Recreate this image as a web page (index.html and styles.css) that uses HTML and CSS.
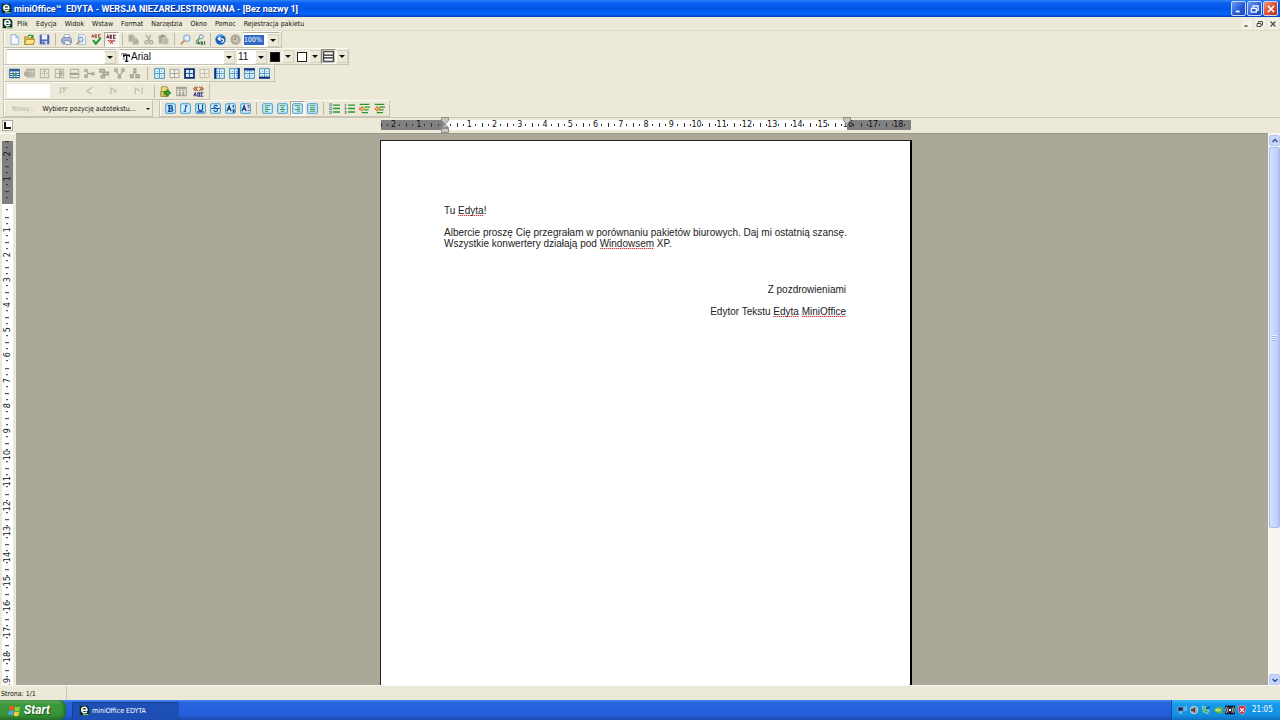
FILE: index.html
```html
<!DOCTYPE html>
<html lang="pl">
<head>
<meta charset="utf-8">
<title>miniOffice EDYTA</title>
<link rel="stylesheet" href="styles.css">
</head>
<body>
<svg class="sprite" aria-hidden="true">
  <symbol id="app" viewBox="0 0 16 16"><path d="M1 1h11l3 3v11H1z" fill="#0b3028"/><path d="M4.500 7.500h7C12 2 4 2 4 7s4.500 5 7.500 3" fill="none" stroke="#fff" stroke-width="2.200"/><path d="M6 14h8" stroke="#8ed08a" stroke-width="1.500"/></symbol>
  <symbol id="new" viewBox="0 0 16 16"><path d="M3 1h7l4 4v10H3z" fill="#f4f9ff" stroke="#7b9fcb"/><path d="M10 1v4h4" fill="#b7d2f2" stroke="#7b9fcb"/></symbol>
  <symbol id="open" viewBox="0 0 16 16"><path d="M1 4h5l1 2h7v9H1z" fill="#e9bd3e" stroke="#9c7a1c"/><path d="M3 8h13l-3 7H1z" fill="#ffe683" stroke="#9c7a1c"/><path d="M6 3c3-3 6-1 7 2m-3 0h3V1" fill="none" stroke="#2a9a2a" stroke-width="1.800"/></symbol>
  <symbol id="save" viewBox="0 0 16 16"><path d="M1 1h14v14H1z" fill="#4a62b8"/><path d="M4 1h8v7H4z" fill="#eef3ff"/><path d="M5 10h7v5H5z" fill="#c9d3f2"/><path d="M6 11h2v4H6z" fill="#33458f"/></symbol>
  <symbol id="print" viewBox="0 0 16 16"><path d="M5 1h7l1 5H4z" fill="#fff" stroke="#7d8fb4"/><path d="M1 7l3-2h9l3 3v4l-4 2H3l-2-2z" fill="#a9b5d6" stroke="#5d6b95"/><path d="M4 10h9l1 5H6z" fill="#f6f8ff" stroke="#6b78a0"/></symbol>
  <symbol id="preview" viewBox="0 0 16 16"><path d="M4 1h7l3 3v11H4z" fill="#f3f8ff" stroke="#8da3c8"/><circle cx="7" cy="8" r="3.500" fill="#cfe6fa" stroke="#5e80b4" stroke-width="1.300"/><path d="M5 11l-4 4" stroke="#b58a4a" stroke-width="2"/></symbol>
  <symbol id="spell" viewBox="0 0 16 16"><path d="M1 5l1.500-4L4 5M2 4h2M6 1v4h2L7 3l1-2zM14 1h-3v4h3" fill="none" stroke="#a03030" stroke-width="1.300"/><path d="M3 9l4 5 7-8" fill="none" stroke="#1f9a35" stroke-width="3.200"/></symbol>
  <symbol id="autospell" viewBox="0 0 16 16"><path d="M1 6l1.500-4L4 6M2 5h2M6 2v4h2L7 4l1-2zM14 2h-3v4h3" fill="none" stroke="#722e48" stroke-width="1.600"/><path d="M3 9l2 2 2-2 2 2 2-2 2 2M6 14l2-2 2 2" fill="none" stroke="#b23a3a" stroke-width="1.500"/></symbol>
  <symbol id="copy" viewBox="0 0 16 16"><path d="M1 1h6l3 3v7H1zM7 6h5l3 3v6H7z" fill="#aaa796" stroke="#c8c5b5"/></symbol>
  <symbol id="cut" viewBox="0 0 16 16"><path d="M4 1l6 9M11 1L7 10" stroke="#aaa796" stroke-width="2"/><circle cx="5" cy="12" r="2.300" fill="none" stroke="#aaa796" stroke-width="2"/><circle cx="12" cy="12" r="2.300" fill="none" stroke="#aaa796" stroke-width="2"/></symbol>
  <symbol id="paste" viewBox="0 0 16 16"><path d="M1 2h11v12H1z" fill="#aaa796"/><path d="M7 6h8v9H7z" fill="#b5b2a2" stroke="#dedbcc"/><path d="M4 1h5v3H4z" fill="#8c8979"/></symbol>
  <symbol id="find" viewBox="0 0 16 16"><circle cx="10" cy="6" r="4.500" fill="#dff0fd" stroke="#84a2c4" stroke-width="1.500"/><path d="M7 9l-6 6" stroke="#c78b57" stroke-width="2.500"/></symbol>
  <symbol id="replace" viewBox="0 0 16 16"><circle cx="9" cy="4" r="3" fill="#dff0fd" stroke="#668ba8" stroke-width="1.300"/><path d="M7 6L1 11" stroke="#6c9b5b" stroke-width="2"/><path d="M4 15l1-4 2 4M9 10v5h2v-3H9M14 10v5h1M1 13h3" fill="none" stroke="#2c6f52" stroke-width="1.500"/></symbol>
  <symbol id="undo" viewBox="0 0 16 16"><circle cx="8" cy="8" r="7.500" fill="#1860b8"/><path d="M2 5a7 7 0 0 1 10-2" fill="none" stroke="#65b5ff" stroke-width="2"/><path d="M5 7h5c4 0 3 5-1 5M8 4L4.500 7 8 10" fill="none" stroke="#fff" stroke-width="1.800"/></symbol>
  <symbol id="redo" viewBox="0 0 16 16"><circle cx="8" cy="8" r="7.500" fill="#aaa796"/><circle cx="8" cy="8" r="4" fill="#c9c6b7"/><path d="M8 4v4H5" fill="none" stroke="#858272" stroke-width="1.500"/></symbol>
  <symbol id="tt" viewBox="0 0 16 16"><path d="M1 4V1h9v3M5 1v10M3 11h4" fill="none" stroke="#777" stroke-width="1.500"/><path d="M5 7V4h10v3M10 4v11M7 15h6" fill="none" stroke="#111" stroke-width="2.400"/></symbol>
  <symbol id="lines" viewBox="0 0 16 16"><path d="M1 1h14v14H1zM1 6h14M1 10h14" fill="#fff" stroke="#222" stroke-width="1.500"/></symbol>
  <symbol id="tbl" viewBox="0 0 16 16"><path d="M1 2h14v12H1z" fill="#fff" stroke="#2e6d9e" stroke-width="1.500"/><path d="M1 2h14v3H1z" fill="#225ca0"/><path d="M1 8h14M1 11h14M6 5v9M10 5v9" stroke="#2e6d9e" stroke-width="1.500"/><path d="M6 8h5v3H6z" fill="#4bb45d"/></symbol>
  <symbol id="tbloff" viewBox="0 0 16 16"><path d="M4 2h11v11H4z" fill="#d8d5c6" stroke="#aaa796" stroke-width="1.500"/><path d="M4 3h11M4 7h11M4 10h11M9 3v10M1 6h5v5H1z" fill="#aaa796" stroke="#aaa796" stroke-width="1.500"/></symbol>
  <symbol id="rowoff" viewBox="0 0 16 16"><path d="M2 2h12v12H2zM2 8h4m4 0h4M8 4v8M6 6l2-2 2 2" fill="none" stroke="#b3b0a0" stroke-width="1.500"/></symbol>
  <symbol id="coloff" viewBox="0 0 16 16"><path d="M2 2h12v12H2zM8 2v12M2 8h12" fill="none" stroke="#b3b0a0" stroke-width="1.500"/><path d="M8 4h4v8H8z" fill="#aaa796"/></symbol>
  <symbol id="deloff" viewBox="0 0 16 16"><path d="M2 6V2h12v4M2 10v4h12v-4" fill="none" stroke="#b3b0a0" stroke-width="1.500"/><path d="M1 7h14v3H1z" fill="#999685"/></symbol>
  <symbol id="mergeoff" viewBox="0 0 16 16"><path d="M1 2h4v3H1zM1 10h4v4H1zM11 7h4v3h-4z" fill="#b3b0a0" stroke="#999685"/><path d="M4 6l3 2-3 2M7 8h4" fill="none" stroke="#999685" stroke-width="1.500"/></symbol>
  <symbol id="splitoff" viewBox="0 0 16 16"><path d="M1 2h7v4H1zM6 6h8v4H6zM3 11h5v3H3z" fill="#c4c1b2" stroke="#999685" stroke-width="1.500"/></symbol>
  <symbol id="formoff" viewBox="0 0 16 16"><path d="M1 1h4v4H1zM11 1h4v4h-4zM6 11h4v4H6z" fill="#b3b0a0" stroke="#999685"/><path d="M3 5l5 6 5-6" fill="none" stroke="#999685" stroke-width="1.500"/></symbol>
  <symbol id="treeoff" viewBox="0 0 16 16"><path d="M7 1h3v6H7zM2 10h4v4H2zM10 10h5v4h-5z" fill="#c4c1b2" stroke="#999685" stroke-width="1.500"/><path d="M8 7l-4 4m5-4l3 4" stroke="#999685"/></symbol>
  <symbol id="grid" viewBox="0 0 16 16"><path d="M1 1h14v14H1z" fill="#f2fbff" stroke="#3b8dbd" stroke-width="1.500"/><path d="M8 1v14M1 8h14" stroke="#4b9bc8" stroke-width="1.500"/><path d="M4 4h2v2H4zM10 4h2v2h-2zM4 10h2v2H4zM10 10h2v2h-2z" fill="#67afd6"/></symbol>
  <symbol id="gridgray" viewBox="0 0 16 16"><path d="M1.500 2h13v12h-13zM8 2v12M2 8h12" fill="#f6f4e9" stroke="#a09d8d" stroke-width="1.300"/></symbol>
  <symbol id="gridbox" viewBox="0 0 16 16"><path d="M1.500 1.500h13v13h-13z" fill="#d8edfc" stroke="#102a76" stroke-width="2.600"/><path d="M8 3v10M3 8h10" stroke="#2867a8" stroke-width="1.500"/></symbol>
  <symbol id="gridleft" viewBox="0 0 16 16"><use href="#grid"/><path d="M2 0v16" stroke="#103185" stroke-width="3"/></symbol>
  <symbol id="gridright" viewBox="0 0 16 16"><use href="#grid"/><path d="M14 0v16" stroke="#103185" stroke-width="3"/></symbol>
  <symbol id="gridtop" viewBox="0 0 16 16"><use href="#grid"/><path d="M0 2h16" stroke="#103185" stroke-width="3"/></symbol>
  <symbol id="gridbot" viewBox="0 0 16 16"><use href="#grid"/><path d="M0 14h16" stroke="#103185" stroke-width="3"/></symbol>
  <symbol id="first" viewBox="0 0 16 16"><path d="M3 3v9M13 4H6l3 3-3 3" fill="none" stroke="#b9b6a7" stroke-width="1.500"/></symbol>
  <symbol id="prev" viewBox="0 0 16 16"><path d="M12 3L5 8l6 4" fill="none" stroke="#b9b6a7" stroke-width="1.500"/></symbol>
  <symbol id="next" viewBox="0 0 16 16"><path d="M4 12V4l7 4-3 2" fill="none" stroke="#b9b6a7" stroke-width="1.500"/></symbol>
  <symbol id="last" viewBox="0 0 16 16"><path d="M3 12V4l6 4M12 3v9" fill="none" stroke="#b9b6a7" stroke-width="1.500"/></symbol>
  <symbol id="export" viewBox="0 0 16 16"><path d="M2 1h8l2 3v11H2z" fill="#f1d773" stroke="#8a7a2c"/><path d="M1 8h8v7H1z" fill="#dbc35b" stroke="#8a7a2c"/><path d="M6 8h4V5l6 5-6 5v-3H6z" fill="#3aa52e" stroke="#14661a"/></symbol>
  <symbol id="fields" viewBox="0 0 16 16"><path d="M1 2h14v12H1z" fill="#ebe8da" stroke="#a3a195" stroke-width="1.500"/><path d="M2 4h12M4 7h3M9 7h3M4 10h3M9 10h3M4 12h3M9 12h3" stroke="#8f8d82" stroke-width="1.500"/></symbol>
  <symbol id="abc" viewBox="0 0 16 16"><path d="M4 1L1 4l3 3M7 1L4 4l3 3M9 1l3 3-3 3M12 1l3 3-3 3" fill="none" stroke="#a9521c" stroke-width="1.500"/><path d="M1 15l2-5 2 5M2 13h3M7 10v5h3l-1-2 1-3zM15 10h-3v5h3" fill="none" stroke="#3d3c80" stroke-width="1.500"/></symbol>
  <symbol id="chip" viewBox="0 0 16 16"><rect x="1" y="1" width="14" height="14" rx="2" fill="#d6effc" stroke="#3d9ad0" stroke-width="1.500"/></symbol>
  <symbol id="bold" viewBox="0 0 16 16"><use href="#chip"/><path d="M6 4v8h3c3 0 3-4 0-4H6h3c2 0 2-4 0-4zM4 4h3M4 12h3" fill="none" stroke="#144fa4" stroke-width="2"/></symbol>
  <symbol id="italic" viewBox="0 0 16 16"><use href="#chip"/><path d="M7 4h4M5 12h4M9 4l-2 8" stroke="#144fa4" stroke-width="1.500"/></symbol>
  <symbol id="under" viewBox="0 0 16 16"><use href="#chip"/><path d="M5 3v5c0 4 6 4 6 0V3M3 13h10M4 3h2M10 3h2" fill="none" stroke="#144fa4" stroke-width="1.800"/></symbol>
  <symbol id="strike" viewBox="0 0 16 16"><use href="#chip"/><path d="M11 5c-2-3-6-1-5 1 1 2 5 1 5 4s-5 3-6 0M2 8h12" fill="none" stroke="#144fa4" stroke-width="1.600"/></symbol>
  <symbol id="sup" viewBox="0 0 16 16"><use href="#chip"/><path d="M3 12l3-8 3 8M4 9h4M12 3v4M11 10h2v3h-2" fill="none" stroke="#12366d" stroke-width="1.700"/></symbol>
  <symbol id="sub" viewBox="0 0 16 16"><use href="#chip"/><path d="M3 12l3-8 3 8M4 9h4" fill="none" stroke="#12366d" stroke-width="1.700"/><path d="M12 3v5M11 4h3M11 11h3" stroke="#b04564" stroke-width="1.500"/></symbol>
  <symbol id="alleft" viewBox="0 0 16 16"><use href="#chip"/><path d="M4 4h8M4 7h5M4 9.500h8M4 12h5" stroke="#238c50" stroke-width="1.300"/></symbol>
  <symbol id="alcenter" viewBox="0 0 16 16"><use href="#chip"/><path d="M4 4h8M5.500 7h5M4 9.500h8M5.500 12h5" stroke="#238c50" stroke-width="1.300"/></symbol>
  <symbol id="alright" viewBox="0 0 16 16"><use href="#chip"/><path d="M4 4h8M7 7h5M4 9.500h8M7 12h5" stroke="#238c50" stroke-width="1.300"/></symbol>
  <symbol id="aljust" viewBox="0 0 16 16"><use href="#chip"/><path d="M4 4h8M4 7h8M4 9.500h8M4 12h8" stroke="#238c50" stroke-width="1.300"/></symbol>
  <symbol id="bullets" viewBox="0 0 16 16"><path d="M6 3h10M6 8h10M6 13h10" stroke="#27962f" stroke-width="2"/><path d="M1 1h3v3H1zM1 6.500h3v3H1zM1 12h3v3H1z" fill="#fff" stroke="#356c80"/></symbol>
  <symbol id="numbers" viewBox="0 0 16 16"><path d="M6 3h10M6 8h10M6 13h10" stroke="#27962f" stroke-width="2"/><path d="M2 1v4M1 7h2v2H1M1 12h2v3H1" fill="none" stroke="#444"/></symbol>
  <symbol id="indent" viewBox="0 0 16 16"><path d="M1 2h14M8 6h8M8 10h6M4 14h9" stroke="#27962f" stroke-width="2"/><path d="M1 7h3V5l4 3.500L4 12v-2H1z" fill="#f3c14f" stroke="#c05423"/></symbol>
  <symbol id="outdent" viewBox="0 0 16 16"><path d="M1 2h14M8 6h8M8 10h6M4 14h9" stroke="#27962f" stroke-width="2"/><path d="M8 7H5V5L1 8.500 5 12v-2h3z" fill="#f3c14f" stroke="#c05423"/></symbol>
  <symbol id="min" viewBox="0 0 16 16"><path d="M3 12h6" stroke="currentColor" stroke-width="3"/></symbol>
  <symbol id="restore" viewBox="0 0 16 16"><path d="M5 6V3h8v7h-3M2 7h8v6H2z" fill="none" stroke="currentColor" stroke-width="2"/></symbol>
  <symbol id="close" viewBox="0 0 16 16"><path d="M3 3l10 10M13 3L3 13" stroke="currentColor" stroke-width="2.500"/></symbol>
  <symbol id="up" viewBox="0 0 16 16"><path d="M3 10l5-5 5 5" fill="none" stroke="#3c548c" stroke-width="3"/></symbol>
  <symbol id="down" viewBox="0 0 16 16"><path d="M3 6l5 5 5-5" fill="none" stroke="#3c548c" stroke-width="3"/></symbol>
  <symbol id="flag" viewBox="0 0 16 16"><path d="M2 3q3-2 6 0L7 8Q4 6 1 8z" fill="#f0582b"/><path d="M9 3q3 2 6 0l-1 5q-3 2-6 0z" fill="#8fd344"/><path d="M1 9q3-2 6 0l-1 5q-3-2-6 0z" fill="#5aa2f2"/><path d="M8 9q3 2 6 0l-1 5q-3 2-6 0z" fill="#f9cf35"/></symbol>
</svg>

<header class="titlebar">
  <svg class="ico"><use href="#app"/></svg>
  <h1>miniOffice™&nbsp; EDYTA - WERSJA NIEZAREJESTROWANA - [Bez nazwy 1]</h1>
  <div class="winbtns">
    <button class="win" aria-label="Minimalizuj"><svg><use href="#min"/></svg></button>
    <button class="win" aria-label="Przywróć"><svg><use href="#restore"/></svg></button>
    <button class="win win-close" aria-label="Zamknij"><svg><use href="#close"/></svg></button>
  </div>
</header>

<nav class="menubar">
  <svg class="ico"><use href="#app"/></svg>
  <button>Plik</button><button>Edycja</button><button>Widok</button><button>Wstaw</button><button>Format</button><button>Narzędzia</button><button>Okno</button><button>Pomoc</button><button>Rejestracja pakietu</button>
  <div class="docbtns">
    <button aria-label="Minimalizuj dokument"><svg><use href="#min"/></svg></button>
    <button aria-label="Przywróć dokument"><svg><use href="#restore"/></svg></button>
    <button aria-label="Zamknij dokument"><svg><use href="#close"/></svg></button>
  </div>
</nav>

<div class="toolbars">
  <div class="row">
    <div class="band">
      <button class="tool" aria-label="Nowy"><svg><use href="#new"/></svg></button>
      <button class="tool" aria-label="Otwórz"><svg><use href="#open"/></svg></button>
      <button class="tool" aria-label="Zapisz"><svg><use href="#save"/></svg></button>
      <i class="sep"></i>
      <button class="tool" aria-label="Drukuj"><svg><use href="#print"/></svg></button>
      <button class="tool" aria-label="Podgląd"><svg><use href="#preview"/></svg></button>
      <button class="tool" aria-label="Pisownia"><svg><use href="#spell"/></svg></button>
      <button class="tool pressed" aria-label="Autopisownia"><svg><use href="#autospell"/></svg></button>
      <i class="sep"></i>
      <button class="tool" aria-label="Kopiuj" disabled><svg><use href="#copy"/></svg></button>
      <button class="tool" aria-label="Wytnij" disabled><svg><use href="#cut"/></svg></button>
      <button class="tool" aria-label="Wklej" disabled><svg><use href="#paste"/></svg></button>
      <i class="sep"></i>
      <button class="tool" aria-label="Znajdź"><svg><use href="#find"/></svg></button>
      <button class="tool" aria-label="Zamień"><svg><use href="#replace"/></svg></button>
      <i class="sep sep-tight"></i>
      <button class="tool" aria-label="Cofnij"><svg><use href="#undo"/></svg></button>
      <button class="tool" aria-label="Ponów" disabled><svg><use href="#redo"/></svg></button>
      <div class="combo combo-zoom"><input class="zoom" value="100%" aria-label="Powiększenie"><button class="drop" aria-label="Lista powiększeń"></button></div>
    </div>
  </div>
  <div class="row">
    <div class="band band-format">
      <div class="combo combo-style"><input value="" aria-label="Styl"><button class="drop" aria-label="Lista stylów"></button></div>
      <div class="combo combo-font"><svg class="tt"><use href="#tt"/></svg><input class="big" value="Arial" aria-label="Czcionka"><button class="drop" aria-label="Lista czcionek"></button></div>
      <div class="combo combo-size"><input class="big" value="11" aria-label="Rozmiar"><button class="drop" aria-label="Lista rozmiarów"></button></div>
      <button class="tool" aria-label="Kolor tekstu"><span class="swatch swatch-black"></span></button><button class="drop" aria-label="Wybór koloru tekstu"></button>
      <button class="tool" aria-label="Kolor tła"><span class="swatch"></span></button><button class="drop" aria-label="Wybór koloru tła"></button>
      <button class="tool pressed-dark" aria-label="Linie"><svg><use href="#lines"/></svg></button><button class="drop" aria-label="Wybór linii"></button>
    </div>
  </div>
  <div class="row">
    <div class="band">
      <button class="tool" aria-label="Wstaw tabelę"><svg><use href="#tbl"/></svg></button>
      <button class="tool" aria-label="Właściwości tabeli" disabled><svg><use href="#tbloff"/></svg></button>
      <button class="tool" aria-label="Wstaw wiersz" disabled><svg><use href="#rowoff"/></svg></button>
      <button class="tool" aria-label="Wstaw kolumnę" disabled><svg><use href="#coloff"/></svg></button>
      <button class="tool" aria-label="Usuń wiersz" disabled><svg><use href="#deloff"/></svg></button>
      <button class="tool" aria-label="Scal komórki" disabled><svg><use href="#mergeoff"/></svg></button>
      <button class="tool" aria-label="Podziel komórki" disabled><svg><use href="#splitoff"/></svg></button>
      <button class="tool" aria-label="Sortuj" disabled><svg><use href="#formoff"/></svg></button>
      <button class="tool" aria-label="Struktura" disabled><svg><use href="#treeoff"/></svg></button>
      <i class="sep sep-wide"></i>
      <button class="tool" aria-label="Wszystkie krawędzie"><svg><use href="#grid"/></svg></button>
      <button class="tool" aria-label="Krawędzie wewnętrzne"><svg><use href="#gridgray"/></svg></button>
      <button class="tool" aria-label="Obramowanie"><svg><use href="#gridbox"/></svg></button>
      <button class="tool faint" aria-label="Bez krawędzi" disabled><svg><use href="#gridgray"/></svg></button>
      <button class="tool" aria-label="Lewa krawędź"><svg><use href="#gridleft"/></svg></button>
      <button class="tool" aria-label="Prawa krawędź"><svg><use href="#gridright"/></svg></button>
      <button class="tool" aria-label="Górna krawędź"><svg><use href="#gridtop"/></svg></button>
      <button class="tool" aria-label="Dolna krawędź"><svg><use href="#gridbot"/></svg></button>
    </div>
  </div>
  <div class="row">
    <div class="band">
      <input class="record" value="" aria-label="Rekord">
      <button class="tool wide" aria-label="Pierwszy" disabled><svg><use href="#first"/></svg></button>
      <button class="tool wide" aria-label="Poprzedni" disabled><svg><use href="#prev"/></svg></button>
      <button class="tool wide" aria-label="Następny" disabled><svg><use href="#next"/></svg></button>
      <button class="tool wide" aria-label="Ostatni" disabled><svg><use href="#last"/></svg></button>
      <i class="sep"></i>
      <button class="tool" aria-label="Źródło danych"><svg><use href="#export"/></svg></button>
      <button class="tool fields" aria-label="Pola"><svg><use href="#fields"/></svg></button>
      <button class="tool fields" aria-label="Nazwy pól"><svg><use href="#abc"/></svg></button>
    </div>
  </div>
  <div class="row">
    <div class="band autotext">
      <button class="label" disabled>Nowy...</button>
      <button class="label pick">Wybierz pozycję autotekstu... <span class="caret"></span></button>
    </div>
    <div class="band">
      <button class="tool" aria-label="Pogrubienie"><svg><use href="#bold"/></svg></button>
      <button class="tool" aria-label="Kursywa"><svg><use href="#italic"/></svg></button>
      <button class="tool" aria-label="Podkreślenie"><svg><use href="#under"/></svg></button>
      <button class="tool" aria-label="Przekreślenie"><svg><use href="#strike"/></svg></button>
      <button class="tool" aria-label="Indeks górny"><svg><use href="#sup"/></svg></button>
      <button class="tool" aria-label="Indeks dolny"><svg><use href="#sub"/></svg></button>
      <i class="sep"></i>
      <button class="tool" aria-label="Do lewej"><svg><use href="#alleft"/></svg></button>
      <button class="tool" aria-label="Do środka"><svg><use href="#alcenter"/></svg></button>
      <button class="tool pressed" aria-label="Do prawej"><svg><use href="#alright"/></svg></button>
      <button class="tool" aria-label="Wyjustuj"><svg><use href="#aljust"/></svg></button>
      <i class="sep"></i>
      <button class="tool" aria-label="Punktory"><svg><use href="#bullets"/></svg></button>
      <button class="tool" aria-label="Numerowanie"><svg><use href="#numbers"/></svg></button>
      <button class="tool" aria-label="Zwiększ wcięcie"><svg><use href="#indent"/></svg></button>
      <button class="tool" aria-label="Zmniejsz wcięcie"><svg><use href="#outdent"/></svg></button>
    </div>
  </div>
</div>

<div class="rulerrow">
  <button class="tab" aria-label="Tabulator"></button>
  <div class="rulerarea">
    <div class="hruler">
      <span>2</span><span>1</span><span class="zero"></span><span>1</span><span>2</span><span>3</span><span>4</span><span>5</span><span>6</span><span>7</span><span>8</span><span>9</span><span>10</span><span>11</span><span>12</span><span>13</span><span>14</span><span>15</span><span>16</span><span>17</span><span>18</span>
      <svg class="marker marker-left" viewBox="0 0 8 16"><path d="M.500.500h7v3L4 7.500.500 3.500zM4 7.500l3.500 3h-7zM.500 11.500h7v4h-7z" fill="#c6c5c0" stroke="#8c8b87"/></svg>
      <svg class="marker marker-right" viewBox="0 0 8 16"><path d="M.500.500h7v3L4 7.500.500 3.500z" fill="#c6c5c0" stroke="#8c8b87"/></svg>
    </div>
  </div>
</div>

<main class="work">
  <div class="vgutter">
    <div class="vruler">
      <span>2</span><span>1</span><span class="zero"></span><span>1</span><span>2</span><span>3</span><span>4</span><span>5</span><span>6</span><span>7</span><span>8</span><span>9</span><span>10</span><span>11</span><span>12</span><span>13</span><span>14</span><span>15</span><span>16</span><span>17</span><span>18</span><span>19</span>
    </div>
  </div>
  <div class="canvas">
    <article class="page">
      <p>Tu <u>Edyta</u>!</p>
      <p>Albercie proszę Cię przegrałam w porównaniu pakietów biurowych. Daj mi ostatnią szansę.<br>Wszystkie konwertery działają pod <u>Windowsem</u> XP.</p>
      <p class="sign">Z pozdrowieniami</p>
      <p class="author">Edytor Tekstu <u>Edyta</u> <u>MiniOffice</u></p>
    </article>
  </div>
  <div class="scroll">
    <button aria-label="W górę"><svg><use href="#up"/></svg></button>
    <div class="track"><div class="thumb"><i class="ridge"></i></div></div>
    <button aria-label="W dół"><svg><use href="#down"/></svg></button>
  </div>
</main>

<div class="status"><span>Strona: 1/1</span></div>

<footer class="taskbar">
  <button class="start"><svg><use href="#flag"/></svg>Start</button>
  <button class="task"><svg class="ico"><use href="#app"/></svg>miniOffice EDYTA</button>
  <div class="tray">
    <svg viewBox="0 0 16 16"><path d="M1 3h9v7H1z" fill="#1b2c52" stroke="#b9c6d8"/><path d="M3 13h6M6 10v3M12 3q2 3 0 6M14 1q3 5 0 9" fill="none" stroke="#d8e4ee"/></svg>
    <svg viewBox="0 0 16 16"><circle cx="8" cy="8" r="6" fill="#a9adb0" stroke="#e8ebee"/><path d="M3 6h3l4-3v10l-4-3H3z" fill="#444c55"/></svg>
    <svg viewBox="0 0 16 16"><path d="M2 2l5 1-1 4 7 2-3 5-6-3z" fill="#3eb559" stroke="#d4f0d9"/><path d="M8 6l6-3" stroke="#24406b" stroke-width="2"/></svg>
    <svg viewBox="0 0 16 16"><path d="M1 8q6-7 14-4v9Q6 15 1 8z" fill="#66b62f"/><path d="M4 8q4-4 8 0-4 4-8 0z" fill="none" stroke="#d9f0b6" stroke-width="1.500"/></svg>
    <svg viewBox="0 0 16 16"><path d="M0 1h16v14H0z" fill="#111437"/><circle cx="8" cy="8" r="2" fill="#fff"/><path d="M5 4q-3 4 0 8M11 4q3 4 0 8M2.500 3q-3 5 0 10M13.500 3q3 5 0 10" fill="none" stroke="#e6dc9a" stroke-width="1.300"/></svg>
    <svg viewBox="0 0 16 16"><path d="M2 2q6-2 12 0v6q-1 5-6 7-5-2-6-7z" fill="#c9283c" stroke="#e9b4bb"/><path d="M5 5l6 6m0-6l-6 6" stroke="#fff" stroke-width="2"/></svg>
    <time>21:05</time>
  </div>
</footer>
</body>
</html>
```
FILE: styles.css
```css
* { box-sizing: border-box; }

body {
  margin: 0;
  height: 100vh;
  display: flex;
  flex-direction: column;
  overflow: hidden;
  background: #ece9d8;
  color: #111;
  font: 7px/10px "DejaVu Sans Condensed", "DejaVu Sans", sans-serif;
}

button, input {
  font: inherit;
  color: inherit;
  margin: 0;
  padding: 0;
  border: 0;
  background: none;
  border-radius: 0;
}

button { display: flex; align-items: center; justify-content: center; white-space: nowrap; }
.sprite { position: absolute; width: 0; height: 0; }
.ico { width: 11px; height: 11px; flex: none; }

/* Title bar */
.titlebar {
  flex: none;
  height: 17px;
  display: flex;
  align-items: center;
  gap: 2px;
  padding: 0 2px 0 1px;
  background: linear-gradient(#2a84f8 0, #0a5ff0 3px, #0356e6 9px, #0565fb 14px, #0340bb 100%);
}
.titlebar h1 {
  margin: 0;
  flex: 1;
  color: #fff;
  font: bold 9px/16px Roboto, sans-serif;
  text-shadow: 1px 1px #0a2f8a;
}
.winbtns { display: flex; gap: 1px; }
.win {
  width: 15px;
  height: 15px;
  color: #fff;
  border: 1px solid #c5d8f8;
  border-radius: 2px;
  background: linear-gradient(135deg, #6d9bf3, #2257d8 60%, #1e4cc2);
}
.win svg { width: 10px; height: 10px; }
.win-close { background: linear-gradient(135deg, #ee9279, #d9492a 60%, #b5341a); }

/* Menu */
.menubar {
  flex: none;
  height: 14px;
  display: flex;
  align-items: center;
  gap: 8px;
  padding: 0 2px;
  border-bottom: 1px solid #dedac8;
}
.menubar .ico { margin-right: -4px; }
.docbtns { display: flex; gap: 3px; margin-left: auto; }
.docbtns button { width: 10px; height: 11px; color: #4c4b47; background: #f4f2e8; }
.docbtns svg { width: 8px; height: 8px; }

/* Toolbars */
.toolbars { flex: none; padding-left: 3px; }
.row { display: flex; height: 17px; }
.row:nth-child(4) { height: 18px; }
.band {
  display: flex;
  align-items: center;
  padding: 0 2px 0 3px;
  border: 1px solid #c6c3b2;
  border-top-color: #fbfaf4;
  box-shadow: inset 1px 0 #fff;
}
.band-format { padding-right: 0; }
.tool { width: 15px; height: 15px; flex: none; border: 1px solid transparent; }
.tool svg { width: 11px; height: 11px; }
.tool:disabled { opacity: .9; }
.tool.faint { opacity: .6; }
.tool.wide { width: 25px; }
.tool.wide svg { width: 12px; height: 12px; }
.tool.fields { width: 17px; }
.pressed { background: #f6f4ec; border-color: #aaa795 #fff #fff #aaa795; }
.pressed-dark { background: #c9c6b8; border-color: #8f8d7f #fff #fff #8f8d7f; }
.sep { flex: none; width: 1px; height: 13px; margin: 0 3px; background: #bdbaa9; }
.sep-tight { margin: 0 2px; }
.sep-wide { margin: 0 4px 0 5px; }

.combo { display: flex; align-items: center; height: 15px; background: #fff; border-top: 1px solid #b5b2a2; }
.combo input { flex: 1; min-width: 0; height: 12px; }
.combo-zoom { width: 36px; padding-left: 1px; }
.combo-style { width: 109px; margin-right: 3px; }
.combo-font { width: 116px; margin-right: 2px; padding-left: 2px; gap: 1px; }
.combo-size { width: 30px; padding-left: 1px; }
.tt { width: 9px; height: 9px; }
.combo .big { font: 10px/12px "Liberation Sans", Arial, sans-serif; }
.combo .zoom { flex: none; width: 20px; height: 10px; color: #fff; background: #316ac5; }
.combo-zoom .drop { margin-left: auto; }
.drop { width: 12px; height: 13px; flex: none; background: #ece9d8; border: 1px solid #d2cfbf; border-left-color: #fff; }
.drop::after, .caret {
  content: "";
  width: 0;
  height: 0;
  border: 3px solid transparent;
  border-top-color: #111;
  border-bottom: 0;
}
.swatch { width: 10px; height: 10px; background: #fff; border: 1px solid #222; }
.swatch-black { background: #000; }
.record { width: 43px; height: 14px; background: #fff; margin-right: 1px; }
.autotext { padding: 0 2px 0 8px; margin-right: 6px; gap: 8px; }
.label { height: 14px; }
.label:disabled { color: #b5b2a3; }
.pick { gap: 10px; }
.caret { border-width: 2px; border-bottom: 0; }

/* Horizontal ruler */
.rulerrow {
  flex: none;
  height: 16px;
  padding-bottom: 1px;
  display: grid;
  grid-template-columns: 16px 1fr 12px;
  align-items: center;
  border-top: 1px solid #c9c6b6;
}
.tab { width: 11px; height: 11px; margin-left: 2px; background: #fff; border: 1px solid #aaa797; }
.tab::after { content: ""; width: 5px; height: 5px; border: solid #111; border-width: 0 0 2px 2px; }
.rulerarea { padding-left: 8px; }
.hruler {
  position: relative;
  width: 530px;
  height: 10px;
  margin: 0 auto;
  display: grid;
  grid-template-columns: repeat(21, 1fr);
  background: linear-gradient(90deg, #808080 0 12%, #fff 12% 88%, #808080 88%);
}
.hruler span {
  text-align: center;
  font: 8px/10px "DejaVu Sans", sans-serif;
  background:
    linear-gradient(#333, #333) 0 50% / 1px 4px no-repeat,
    linear-gradient(#333, #333) 25% 50% / 1px 2px no-repeat,
    linear-gradient(#333, #333) 75% 50% / 1px 2px no-repeat;
}
.marker { position: absolute; top: -3px; width: 8px; height: 16px; }
.marker-left { left: 60px; }
.marker-right { right: 60px; }

/* Work area */
.work {
  flex: 1;
  min-height: 0;
  display: grid;
  grid-template-columns: 16px minmax(0, 1fr) 12px;
  grid-template-rows: minmax(0, 1fr);
}
.vgutter { overflow: hidden; padding: 7px 3px 0 2px; border-top: 1px solid #fff; }
.vruler {
  height: 554px;
  display: grid;
  grid-template-rows: repeat(22, 1fr);
  background: linear-gradient(#808080 0 63px, #fff 63px);
}
.vruler span {
  writing-mode: vertical-rl;
  transform: rotate(180deg);
  text-align: center;
  font: 8px/11px "DejaVu Sans", sans-serif;
  background:
    linear-gradient(#333, #333) 50% 100% / 4px 1px no-repeat,
    linear-gradient(#333, #333) 50% 25% / 2px 1px no-repeat,
    linear-gradient(#333, #333) 50% 75% / 2px 1px no-repeat;
}
.zero { color: transparent; }
.canvas { overflow: hidden; background: #aca899; padding: 6px 0 0 8px; border-top: 1px solid #98958a; }
.page {
  width: 532px;
  height: 750px;
  margin: 0 auto;
  padding: 64px 64px 64px 63px;
  background: #fff;
  border: 1px solid #222;
  border-right: 2px solid #000;
  color: #222;
  font: 10px/11px "Liberation Sans", Arial, sans-serif;
}
.page p { margin: 0 0 11px; white-space: nowrap; }
.page u {
  text-decoration: none;
  background: repeating-linear-gradient(90deg, #d84040 0 1px, #f3b5b5 1px 2px) 0 100% / 100% 1px no-repeat;
}
.page .sign { margin-top: 35px; }
.page .sign, .page .author { text-align: right; }

/* Scrollbar */
.scroll { display: flex; flex-direction: column; gap: 1px; padding: 2px 0 0 1px; background: #f6f5ef; }
.scroll button {
  height: 11px;
  flex: none;
  border: 1px solid #b4c8f6;
  border-radius: 2px;
  background: #c8d7fb;
}
.scroll svg { width: 8px; height: 8px; }
.track { flex: 1; background: #f6f5ef; }
.thumb {
  height: 72.5%;
  display: flex;
  align-items: center;
  justify-content: center;
  border: 1px solid #a9bff0;
  border-radius: 2px;
  background: linear-gradient(90deg, #d3e0fd, #c1d3fb 70%, #b0c4f2);
}
.ridge { width: 5px; height: 6px; background: repeating-linear-gradient(#eef4fe 0 1px, #9db5ea 1px 2px); }

/* Status and taskbar */
.status { flex: none; height: 15px; display: flex; border-top: 1px solid #f8f6ee; }
.status span { width: 67px; padding: 3px 1px 0; border-right: 1px solid #cbc8b8; }
.taskbar {
  flex: none;
  height: 20px;
  display: flex;
  align-items: stretch;
  background: linear-gradient(#3f86f0 0, #2663de 3px, #245edb 15px, #1c49ae 100%);
}
.start {
  width: 66px;
  gap: 3px;
  padding-right: 8px;
  color: #fff;
  font: italic bold 12px/18px Roboto, sans-serif;
  text-shadow: 1px 1px 1px #234d20;
  border-radius: 0 7px 7px 0;
  background: linear-gradient(#6cb566 0, #3c9a3c 4px, #379438 14px, #2a752b 100%);
  box-shadow: inset -2px 0 3px #1f6a26;
}
.start svg { width: 13px; height: 13px; }
.task {
  width: 107px;
  margin: 2px 0 1px 6px;
  padding-left: 7px;
  gap: 2px;
  justify-content: flex-start;
  color: #fff;
  border-radius: 2px;
  background: #1d4fb5;
  box-shadow: inset 1px 1px #163e93;
}
.tray {
  margin-left: auto;
  width: 109px;
  display: flex;
  align-items: center;
  gap: 2px;
  padding-left: 5px;
  color: #fff;
  background: linear-gradient(#3fb5f5 0, #149cec 4px, #1290e2 15px, #0f6fc0 100%);
  border-left: 1px solid #0c4ea5;
}
.tray svg { width: 10px; height: 10px; flex: none; }
.tray time { margin-left: 3px; font-size: 8px; }
```
